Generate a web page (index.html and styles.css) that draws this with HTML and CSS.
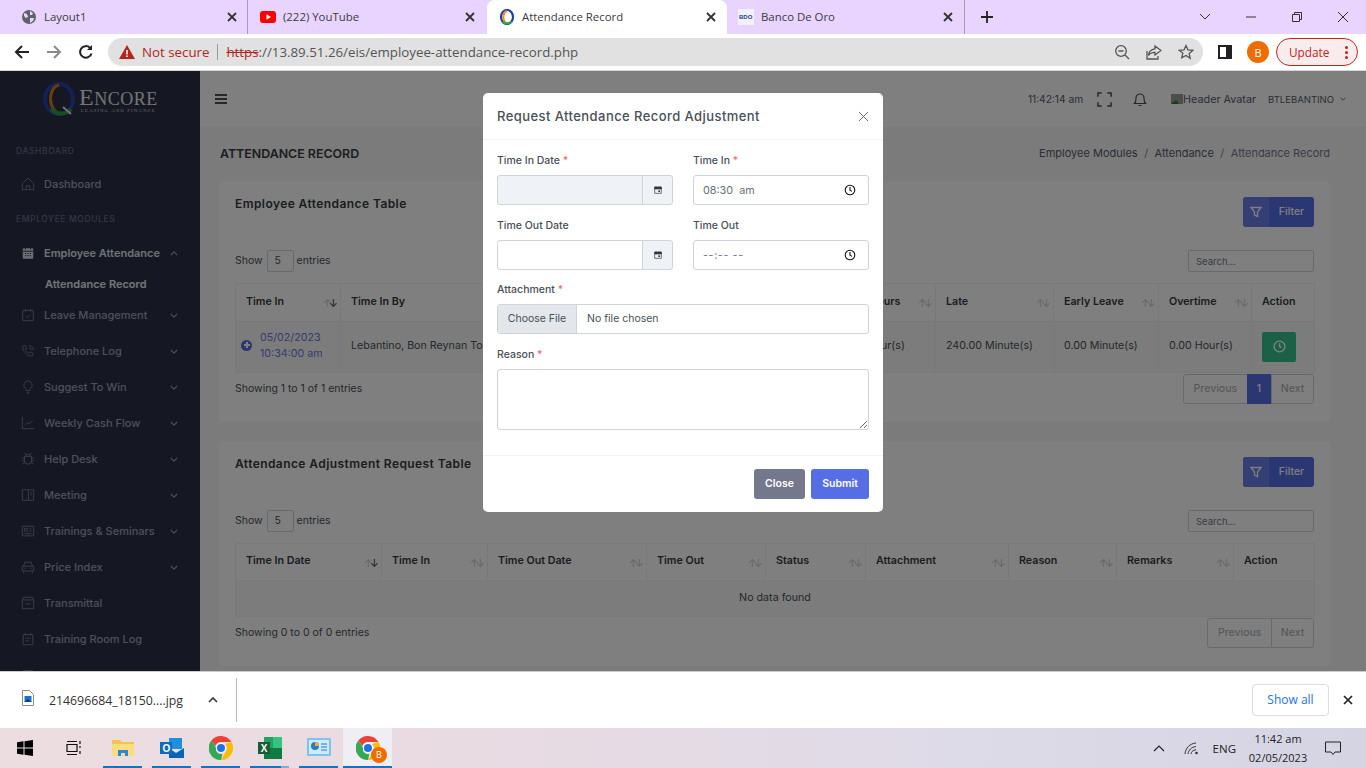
FILE: index.html
```html
<!DOCTYPE html>
<html lang="en">
<head>
    <meta charset="UTF-8">
    <meta name="viewport" content="width=device-width, initial-scale=1.0">
    <title>Attendance Record</title>
    <link rel="stylesheet" href="styles.css">
</head>
<body>
    <!-- browser tabs -->
    <div class="tabstrip">
        <div class="tab tab-first">
            <svg class="favicon" viewBox="0 0 16 16"><circle cx="8" cy="8" r="7" fill="#5f6368"/><path d="M3 4l3 1 1 3-2 1-2-2zM9 2l3 2-1 2-2 0zM9 9l4 0-1 3-3 2z" fill="#e8d4ff"/></svg>
            <span class="tab-title">Layout1</span>
            <svg class="tab-x" viewBox="0 0 10 10"><path d="M1 1l8 8M9 1l-8 8"/></svg>
        </div>
        <div class="tab tab-sep">
            <svg class="favicon" viewBox="0 0 16 16"><rect y="2" width="16" height="12" rx="3" fill="#f00"/><path d="M6.5 5.2v5.6L11 8z" fill="#fff"/></svg>
            <span class="tab-title">(222) YouTube</span>
            <svg class="tab-x" viewBox="0 0 10 10"><path d="M1 1l8 8M9 1l-8 8"/></svg>
        </div>
        <div class="tab tab-active">
            <svg class="favicon" viewBox="0 0 16 16"><ellipse cx="8" cy="8" rx="6" ry="7" fill="none" stroke="#1d3fb8" stroke-width="2.2"/><path d="M8 2C4 3 3 10 6 13" fill="none" stroke="#f28c1e" stroke-width="2"/><path d="M4 12.500c2 2.500 6 2.500 8.500 0" fill="none" stroke="#39a935" stroke-width="2.400"/></svg>
            <span class="tab-title">Attendance Record</span>
            <svg class="tab-x" viewBox="0 0 10 10"><path d="M1 1l8 8M9 1l-8 8"/></svg>
        </div>
        <div class="tab tab-last">
            <svg class="favicon" viewBox="0 0 16 16"><rect width="16" height="16" fill="#f1f1f6"/><text x="1" y="10" class="bdo-mark">BDO</text></svg>
            <span class="tab-title">Banco De Oro</span>
            <svg class="tab-x" viewBox="0 0 10 10"><path d="M1 1l8 8M9 1l-8 8"/></svg>
        </div>
        <svg class="new-tab" viewBox="0 0 12 12"><path d="M6 0v12M0 6h12"/></svg>
        <div class="window-btns">
            <svg class="win-chev" viewBox="0 0 12 8"><path d="M1 1l5 5 5-5"/></svg>
            <svg class="win-min" viewBox="0 0 12 12"><path d="M1 6h10"/></svg>
            <svg class="win-max" viewBox="0 0 12 12"><path d="M1.5 3.5h7v7h-7zM3.5 3.5v-2h7v7h-2"/></svg>
            <svg class="win-close" viewBox="0 0 12 12"><path d="M1 1l10 10M11 1l-10 10"/></svg>
        </div>
    </div>

    <!-- address bar -->
    <div class="toolbar">
        <svg class="nav-btn" viewBox="0 0 16 16"><path d="M15 8H2M8 2L2 8l6 6" stroke="#222"/></svg>
        <svg class="nav-btn" viewBox="0 0 16 16"><path d="M1 8h13M8 2l6 6-6 6" stroke="#8a8a8a"/></svg>
        <svg class="nav-btn" viewBox="0 0 16 16"><path d="M13.5 9.5A5.8 5.8 0 1 1 12 3.8" stroke="#222"/><path d="M14 1v5H9z" fill="#222" stroke="none"/></svg>
        <div class="omnibox">
            <svg class="warn" viewBox="0 0 16 14"><path d="M8 0l8 14H0z" fill="#b3261e"/><path d="M7.2 5h1.6v4.5H7.2zM7.2 10.5h1.6V12H7.2z" fill="#fff"/></svg>
            <span class="not-secure">Not secure</span>
            <span class="omni-sep"></span>
            <span class="url"><span class="https">https</span>://13.89.51.26/eis/employee-attendance-record.php</span>
            <svg class="omni-icon omni-zoom" viewBox="0 0 16 16"><circle cx="7" cy="7" r="5.3"/><path d="M11 11l4 4M4.5 7h5"/></svg>
            <svg class="omni-icon" viewBox="0 0 16 16"><path d="M9 2l6 4.5L9 11V8.3C6 8.3 3.8 9.3 2.5 11.5 2.8 8 5 5.3 9 4.8z M1 7v8h11v-3"/></svg>
            <svg class="omni-icon" viewBox="0 0 16 16"><path d="M8 1.5l2 4.4 4.8.5-3.6 3.2 1 4.7L8 11.4l-4.2 2.4 1-4.7L1.200 6.400l4.800-.5z"/></svg>
        </div>
        <svg class="side-panel" viewBox="0 0 14 14"><rect x="1" y="1" width="12" height="12" fill="#fff" stroke="#202124" stroke-width="2"/><rect x="8" y="1" width="5" height="12" fill="#202124"/></svg>
        <span class="profile">B</span>
        <div class="update-btn">Update <span class="update-dots"><i></i><i></i><i></i></span></div>
    </div>

    <!-- web page -->
    <div class="viewport">
        <aside class="sidebar">
            <div class="logo">
                <svg class="logo-mark" viewBox="0 0 36 36">
                    <ellipse cx="18" cy="18" rx="14" ry="15" fill="none" stroke="#2a3fb0" stroke-width="4"/>
                    <path d="M18 4C9 6 6 22 15 31" fill="none" stroke="#d97a1a" stroke-width="3"/>
                    <path d="M10 28c5 6 16 6 20 0" fill="none" stroke="#2f9e3f" stroke-width="4"/>
                    <path d="M22 26l8 7" stroke="#dfe3ee" stroke-width="2"/>
                </svg>
                <div class="logo-text">
                    <div class="logo-name"><span class="logo-cap">E</span>NCORE</div>
                    <div class="logo-sub">LEASING AND FINANCE</div>
                </div>
            </div>
            <div class="menu-title menu-title-first">DASHBOARD</div>
            <div class="menu-item">
                <svg class="menu-icon" viewBox="0 0 16 16"><path d="M1.500 7.500L8 1.500l6.500 6v7h-13zM6 14.500V10h4v4.500"/></svg>
                <span class="menu-label">Dashboard</span>
            </div>
            <div class="menu-title">EMPLOYEE MODULES</div>
            <div class="menu-item menu-open">
                <svg class="menu-icon" viewBox="0 0 16 16"><rect x="2" y="2.500" width="12" height="12" rx="1" fill="#d9dce8" stroke="none"/><path d="M5 1v3M11 1v3M2 6h12M4.500 8.500h1.500M7.300 8.500h1.500M10 8.500h1.500M4.500 11h1.500M7.300 11h1.500M10 11h1.500" stroke="#2a3046"/></svg>
                <span class="menu-label">Employee Attendance</span>
                <svg class="menu-chev" viewBox="0 0 10 6"><path d="M1 5l4-4 4 4"/></svg>
            </div>
            <div class="submenu-item">Attendance Record</div>
            <div class="menu-item">
                <svg class="menu-icon" viewBox="0 0 16 16"><path d="M2 3h12v11.500H2zM5 1v3M11 1v3M5.500 9l2 2 3.500-3.500"/></svg>
                <span class="menu-label">Leave Management</span>
                <svg class="menu-chev" viewBox="0 0 10 6"><path d="M1 1l4 4 4-4"/></svg>
            </div>
            <div class="menu-item">
                <svg class="menu-icon" viewBox="0 0 16 16"><path d="M2 2.500l2.500-1 2 3-1.500 1.500c.8 2 2.200 3.400 4.500 4.500L11 9l3 2-1 2.500c-5 1.500-12-5.500-11-11zM9 1.500c3 .3 5 2.500 5.500 5.500M9 4c1.500.3 2.500 1.300 3 3"/></svg>
                <span class="menu-label">Telephone Log</span>
                <svg class="menu-chev" viewBox="0 0 10 6"><path d="M1 1l4 4 4-4"/></svg>
            </div>
            <div class="menu-item">
                <svg class="menu-icon" viewBox="0 0 16 16"><path d="M8 1a4.800 4.800 0 0 0-3 8.500c.7.7 1 1.500 1 2.500h4c0-1 .3-1.800 1-2.500A4.800 4.800 0 0 0 8 1zM6.500 14h3M7 15.500h2"/></svg>
                <span class="menu-label">Suggest To Win</span>
                <svg class="menu-chev" viewBox="0 0 10 6"><path d="M1 1l4 4 4-4"/></svg>
            </div>
            <div class="menu-item">
                <svg class="menu-icon" viewBox="0 0 16 16"><path d="M1.500 1v13.500H15M4 10.500l3-3 2 1.500 4.500-3.500"/></svg>
                <span class="menu-label">Weekly Cash Flow</span>
                <svg class="menu-chev" viewBox="0 0 10 6"><path d="M1 1l4 4 4-4"/></svg>
            </div>
            <div class="menu-item">
                <svg class="menu-icon" viewBox="0 0 16 16"><path d="M4 5h8v5a4 4 0 0 1-8 0zM5.500 5a2.500 2.500 0 0 1 5 0M4 1l2 2.500M12 1l-2 2.500M1 7h3M12 7h3M1 10h3M12 10h3M1.500 14l3-2M14.500 14l-3-2"/></svg>
                <span class="menu-label">Help Desk</span>
                <svg class="menu-chev" viewBox="0 0 10 6"><path d="M1 1l4 4 4-4"/></svg>
            </div>
            <div class="menu-item">
                <svg class="menu-icon" viewBox="0 0 16 16"><path d="M1.500 2h13v12h-13zM8.500 2v12M10.500 5h2M10.500 7.500h2"/></svg>
                <span class="menu-label">Meeting</span>
                <svg class="menu-chev" viewBox="0 0 10 6"><path d="M1 1l4 4 4-4"/></svg>
            </div>
            <div class="menu-item">
                <svg class="menu-icon" viewBox="0 0 16 16"><path d="M1.500 2.500h13v11h-13zM4 5h3.500v3H4zM9.500 5.500H12M9.500 8H12M4 11h8"/></svg>
                <span class="menu-label">Trainings &amp; Seminars</span>
                <svg class="menu-chev" viewBox="0 0 10 6"><path d="M1 1l4 4 4-4"/></svg>
            </div>
            <div class="menu-item">
                <svg class="menu-icon" viewBox="0 0 16 16"><path d="M3 7l1.500-4.500h7L13 7M1.500 7h13v5.500h-13zM3 12.500V15M13 12.500V15M4 9.500h1.500M10.500 9.500H12"/></svg>
                <span class="menu-label">Price Index</span>
                <svg class="menu-chev" viewBox="0 0 10 6"><path d="M1 1l4 4 4-4"/></svg>
            </div>
            <div class="menu-item">
                <svg class="menu-icon" viewBox="0 0 16 16"><path d="M1.500 4.500L3 1.500h10l1.500 3v10h-13zM1.500 4.500h13M5.500 8c0 2 5 2 5 0"/></svg>
                <span class="menu-label">Transmittal</span>
            </div>
            <div class="menu-item">
                <svg class="menu-icon" viewBox="0 0 16 16"><path d="M2.500 3h11v11.500h-11zM5 1v3M11 1v3M5 7h6M5 10h4"/></svg>
                <span class="menu-label">Training Room Log</span>
            </div>
            <div class="menu-item menu-clipped">
                <svg class="menu-icon" viewBox="0 0 16 16"><path d="M2.500 3h11v11.500h-11zM5 7h6"/></svg>
            </div>
        </aside>

        <main class="main">
            <header class="topbar">
                <svg class="hamburger" viewBox="0 0 12 10"><path d="M0 1h12M0 5h12M0 9h12"/></svg>
                <div class="topbar-right">
                    <span class="clock">11:42:14 am</span>
                    <svg class="fullscreen" viewBox="0 0 16 16"><path d="M1 5V1h4M11 1h4v4M15 11v4h-4M5 15H1v-4"/></svg>
                    <svg class="bell" viewBox="0 0 16 16"><path d="M2.500 12.500c1-1 1.500-2 1.500-5.500a4 4 0 0 1 8 0c0 3.500.5 4.500 1.500 5.500zM6.500 14.500h3"/></svg>
                    <span class="avatar"><svg class="broken-img" viewBox="0 0 12 10"><rect width="12" height="10" fill="#9a9a9a"/><path d="M0 10l5-4 3 4z" fill="#2f7a2f"/></svg>Header Avatar</span>
                    <span class="username">BTLEBANTINO</span>
                    <svg class="user-chev" viewBox="0 0 10 6"><path d="M1 1l4 4 4-4"/></svg>
                </div>
            </header>

            <div class="page-title-row">
                <h1 class="page-title">ATTENDANCE RECORD</h1>
                <div class="breadcrumb">
                    <span>Employee Modules</span><i>/</i><span>Attendance</span><i>/</i><span class="crumb-now">Attendance Record</span>
                </div>
            </div>

            <section class="card">
                <div class="card-head">
                    <h2 class="card-title">Employee Attendance Table</h2>
                    <div class="filter-btn">
                        <span class="filter-icon"><svg viewBox="0 0 12 12"><path d="M1 1.500h10L7.500 6v4.500l-3-1.500V6z"/></svg></span>
                        <span class="filter-text">Filter</span>
                    </div>
                </div>
                <div class="table-controls">
                    <div class="show-entries">Show <span class="page-size">5</span> entries</div>
                    <input class="search" type="text" placeholder="Search...">
                </div>
                <table class="data-table attendance-table">
                    <colgroup>
                        <col class="c105"><col class="c245"><col class="c245"><col class="c105"><col class="c118"><col class="c105"><col class="c93"><col class="c63">
                    </colgroup>
                    <thead>
                        <tr>
                            <th>Time In<span class="sort sort-down"><i>↑</i><b>↓</b></span></th>
                            <th>Time In By<span class="sort"><i>↑</i><i>↓</i></span></th>
                            <th>Time Out<span class="sort"><i>↑</i><i>↓</i></span></th>
                            <th>Total Hours<span class="sort"><i>↑</i><i>↓</i></span></th>
                            <th>Late<span class="sort"><i>↑</i><i>↓</i></span></th>
                            <th>Early Leave<span class="sort"><i>↑</i><i>↓</i></span></th>
                            <th>Overtime<span class="sort"><i>↑</i><i>↓</i></span></th>
                            <th>Action</th>
                        </tr>
                    </thead>
                    <tbody>
                        <tr>
                            <td class="time-cell">
                                <span class="expand-dot"></span>
                                <span class="time-link">05/02/2023<br>10:34:00 am</span>
                            </td>
                            <td>Lebantino, Bon Reynan Torres</td>
                            <td></td>
                            <td>8.00 Hour(s)</td>
                            <td>240.00 Minute(s)</td>
                            <td>0.00 Minute(s)</td>
                            <td>0.00 Hour(s)</td>
                            <td><span class="action-btn"><svg viewBox="0 0 12 12"><circle cx="6" cy="6" r="5"/><path d="M6 3v3l2 1"/></svg></span></td>
                        </tr>
                    </tbody>
                </table>
                <div class="table-foot">
                    <div class="showing">Showing 1 to 1 of 1 entries</div>
                    <div class="pager">
                        <span class="pager-btn">Previous</span><span class="pager-btn pager-now">1</span><span class="pager-btn">Next</span>
                    </div>
                </div>
            </section>

            <section class="card">
                <div class="card-head">
                    <h2 class="card-title">Attendance Adjustment Request Table</h2>
                    <div class="filter-btn">
                        <span class="filter-icon"><svg viewBox="0 0 12 12"><path d="M1 1.500h10L7.500 6v4.500l-3-1.500V6z"/></svg></span>
                        <span class="filter-text">Filter</span>
                    </div>
                </div>
                <div class="table-controls">
                    <div class="show-entries">Show <span class="page-size">5</span> entries</div>
                    <input class="search" type="text" placeholder="Search...">
                </div>
                <table class="data-table request-table">
                    <colgroup>
                        <col class="c146"><col class="c106"><col class="c159"><col class="c119"><col class="c100"><col class="c143"><col class="c108"><col class="c117"><col class="c81">
                    </colgroup>
                    <thead>
                        <tr>
                            <th>Time In Date<span class="sort sort-down"><i>↑</i><b>↓</b></span></th>
                            <th>Time In<span class="sort"><i>↑</i><i>↓</i></span></th>
                            <th>Time Out Date<span class="sort"><i>↑</i><i>↓</i></span></th>
                            <th>Time Out<span class="sort"><i>↑</i><i>↓</i></span></th>
                            <th>Status<span class="sort"><i>↑</i><i>↓</i></span></th>
                            <th>Attachment<span class="sort"><i>↑</i><i>↓</i></span></th>
                            <th>Reason<span class="sort"><i>↑</i><i>↓</i></span></th>
                            <th>Remarks<span class="sort"><i>↑</i><i>↓</i></span></th>
                            <th>Action</th>
                        </tr>
                    </thead>
                    <tbody>
                        <tr><td class="no-data" colspan="9">No data found</td></tr>
                    </tbody>
                </table>
                <div class="table-foot">
                    <div class="showing">Showing 0 to 0 of 0 entries</div>
                    <div class="pager">
                        <span class="pager-btn">Previous</span><span class="pager-btn">Next</span>
                    </div>
                </div>
            </section>
        </main>

        <!-- modal over the dimmed page -->
        <div class="backdrop">
            <div class="modal">
                <div class="modal-head">
                    <h3 class="modal-title">Request Attendance Record Adjustment</h3>
                    <svg class="modal-x" viewBox="0 0 12 12"><path d="M1 1l10 10M11 1l-10 10"/></svg>
                </div>
                <form class="modal-body">
                    <div class="form-row">
                        <div class="field">
                            <label>Time In Date <em>*</em></label>
                            <div class="date-group">
                                <input class="date-input date-locked" type="text" readonly>
                                <span class="date-addon"><svg viewBox="0 0 12 12"><path d="M1 2h10v9H1z" fill="none"/><path d="M1 1.500h10v3H1zM3 .5v2M9 .5v2" /><rect x="6.500" y="6.500" width="2.500" height="2.500" class="cal-dot"/></svg></span>
                            </div>
                        </div>
                        <div class="field">
                            <label>Time In <em>*</em></label>
                            <div class="time-input"><span>08:30&nbsp; am</span><svg viewBox="0 0 12 12"><circle cx="6" cy="6" r="4.800"/><path d="M6 3v3.200l2 1.200"/></svg></div>
                        </div>
                    </div>
                    <div class="form-row form-row-tight">
                        <div class="field">
                            <label>Time Out Date</label>
                            <div class="date-group">
                                <input class="date-input" type="text">
                                <span class="date-addon"><svg viewBox="0 0 12 12"><path d="M1 2h10v9H1z" fill="none"/><path d="M1 1.500h10v3H1zM3 .5v2M9 .5v2" /><rect x="6.500" y="6.500" width="2.500" height="2.500" class="cal-dot"/></svg></span>
                            </div>
                        </div>
                        <div class="field">
                            <label>Time Out</label>
                            <div class="time-input time-empty"><span>--:-- --</span><svg viewBox="0 0 12 12"><circle cx="6" cy="6" r="4.800"/><path d="M6 3v3.200l2 1.200"/></svg></div>
                        </div>
                    </div>
                    <div class="field">
                        <label>Attachment <em>*</em></label>
                        <div class="file-input"><span class="file-btn">Choose File</span><span class="file-name">No file chosen</span></div>
                    </div>
                    <div class="field">
                        <label>Reason <em>*</em></label>
                        <textarea class="reason"></textarea>
                    </div>
                </form>
                <div class="modal-foot">
                    <button class="btn btn-close" type="button">Close</button>
                    <button class="btn btn-submit" type="button">Submit</button>
                </div>
            </div>
        </div>
    </div>

    <!-- downloads shelf -->
    <div class="downloads">
        <svg class="dl-file" viewBox="0 0 12 16"><path d="M.5.500h7l4 4v11H.5z" fill="#fff" stroke="#8a8a8a"/><rect x="2.500" y="6" width="7" height="6" fill="#1a73c8"/><path d="M2.500 12l3-3 4 3z" fill="#0b3f78"/></svg>
        <span class="dl-name">214696684_18150....jpg</span>
        <svg class="dl-caret" viewBox="0 0 10 6"><path d="M1 5l4-4 4 4"/></svg>
        <span class="dl-sep"></span>
        <span class="show-all">Show all</span>
        <svg class="dl-x" viewBox="0 0 10 10"><path d="M1 1l8 8M9 1l-8 8"/></svg>
    </div>

    <!-- windows taskbar -->
    <div class="taskbar">
        <div class="task-item">
            <svg class="task-icon task-win" viewBox="0 0 16 16"><path d="M0 2.300l6.500-1v6.200H0zM7.500 1.200L16 0v7.500H7.500zM0 8.500h6.500v6.200l-6.500-1zM7.500 8.500H16V16l-8.500-1.200z" fill="#000"/></svg>
        </div>
        <div class="task-item">
            <svg class="task-icon task-view" viewBox="0 0 16 16"><path d="M1 4.500h10v7H1zM1 1.500h10M1 14.500h10M14 1v3M14 6v2M14 11v3" fill="none" stroke="#111" stroke-width="1.200"/></svg>
        </div>
        <div class="task-item task-on">
            <svg class="task-icon" viewBox="0 0 24 20"><path d="M1 2h8l2 2h12v14H1z" fill="#f3c34e"/><path d="M1 6h22v12H1z" fill="#fbdc7e"/><path d="M7 18v-6h10v6h-3v-3h-4v3z" fill="#2b88d8"/></svg>
        </div>
        <div class="task-item task-on">
            <svg class="task-icon" viewBox="0 0 24 24"><path d="M9 2h13v11H9z" fill="#1f8fe0"/><path d="M9 12l7 5 8-5v10H9z" fill="#0a64b4"/><rect x="0" y="6" width="12" height="12" fill="#0f6cbd"/><text x="2.500" y="16" class="task-letter">O</text></svg>
        </div>
        <div class="task-item task-on">
            <svg class="task-icon" viewBox="0 0 24 24"><use href="#chrome-logo"/></svg>
        </div>
        <div class="task-item task-on task-split">
            <svg class="task-icon" viewBox="0 0 24 24"><rect x="6" y="1" width="18" height="22" fill="#21a366"/><path d="M15 1h9v11h-9z" fill="#33c481"/><path d="M6 12h18v11H6z" fill="#107c41"/><rect x="0" y="6" width="12" height="12" fill="#185c37"/><text x="2.800" y="16" class="task-letter">X</text></svg>
        </div>
        <div class="task-item task-on">
            <svg class="task-icon" viewBox="0 0 24 20"><rect width="24" height="18" rx="1" fill="#7cc4ee"/><rect x="2" y="2" width="20" height="14" fill="#cfeafa"/><circle cx="8" cy="8" r="4" fill="#1f7fc8"/><path d="M8 8V4a4 4 0 0 1 4 4z" fill="#f3a93c"/><path d="M14 6h6M14 9h6M14 12h6" stroke="#1f7fc8"/></svg>
        </div>
        <div class="task-item task-on task-active">
            <svg class="task-icon task-chrome" viewBox="0 0 24 24"><use href="#chrome-logo"/></svg>
            <span class="task-badge">B</span>
        </div>
        <div class="tray">
            <svg class="tray-caret" viewBox="0 0 12 7"><path d="M1 6l5-5 5 5"/></svg>
            <svg class="tray-wifi" viewBox="0 0 16 14"><path d="M1 13C1.500 7 6 2.500 12 2M4 13c.5-4 3.500-7 8-7.500M7 13c.3-2 2-4 5-4.300"/><circle cx="12.500" cy="12" r="1.300" class="wifi-dot"/></svg>
            <span class="tray-lang">ENG</span>
            <div class="tray-clock">11:42 am<br>02/05/2023</div>
            <svg class="tray-note" viewBox="0 0 16 15"><path d="M.5 1h15v10H10l-2 2.500L6 11H.5z"/></svg>
        </div>
    </div>

    <svg class="sprite" viewBox="0 0 24 24">
        <symbol id="chrome-logo" viewBox="0 0 24 24">
            <path d="M12 0a12 12 0 0 1 10.400 6H12a6 6 0 0 0-5.800 4.500L2.500 4.300A12 12 0 0 1 12 0z" fill="#ea4335"/>
            <path d="M22.400 6A12 12 0 0 1 12 24l5.200-9A6 6 0 0 0 16 8z" fill="#fbbc04"/>
            <path d="M12 24A12 12 0 0 1 2.500 4.300L7 12a5 5 0 0 0 6.500 5.800z" fill="#34a853"/>
            <circle cx="12" cy="12" r="5" fill="#fff"/>
            <circle cx="12" cy="12" r="4" fill="#1a73e8"/>
        </symbol>
    </svg>
</body>
</html>
```

FILE: styles.css
```css
* {
    box-sizing: border-box;
}
html, body {
    margin: 0;
    padding: 0;
}
body {
    width: 1366px;
    height: 768px;
    overflow: hidden;
    font-family: "Open Sans", sans-serif;
    background-color: #fff;
    color: #202124;
}
svg {
    display: block;
    flex: none;
}
.sprite {
    display: none;
}

/* tabs */
.tabstrip {
    display: flex;
    align-items: center;
    height: 34px;
    background-color: #e8d4ff;
}
.tab {
    display: flex;
    align-items: center;
    height: 34px;
    font-size: 11.400px;
    color: #3c3c3c;
}
.tab-first {
    width: 247px;
    padding: 0 10px 0 21px;
}
.tab-sep {
    width: 240px;
    padding: 0 12px 0 12px;
    border-left: 1px solid #a89cb5;
}
.tab-active {
    width: 240px;
    padding: 0 11px 0 12px;
    background-color: #fff;
    border-radius: 8px 8px 0 0;
}
.tab-last {
    width: 238px;
    padding: 0 11px 0 11px;
    border-right: 1px solid #a89cb5;
}
.favicon {
    width: 16px;
    height: 16px;
    margin-right: 7px;
}
.tab-title {
    flex: 1;
    margin-top: -2px;
    white-space: nowrap;
}
.tab-x {
    width: 10px;
    height: 10px;
    fill: none;
    stroke: #333;
    stroke-width: 1.800;
}
.bdo-mark {
    font-family: "Liberation Sans", sans-serif;
    font-size: 6px;
    font-weight: 700;
    fill: #1c3f94;
}
.new-tab {
    width: 12px;
    height: 12px;
    margin-left: 16px;
    fill: none;
    stroke: #222;
    stroke-width: 1.800;
}
.window-btns {
    display: flex;
    align-items: center;
    margin-left: auto;
    margin-right: 17px;
    gap: 34px;
}
.window-btns svg {
    fill: none;
    stroke: #333;
    stroke-width: 1;
    width: 12px;
    height: 12px;
}
.window-btns .win-chev {
    height: 8px;
}

/* address bar */
.toolbar {
    display: flex;
    align-items: center;
    height: 37px;
    padding-left: 14px;
    background-color: #fff;
    border-bottom: 1px solid #d5d5d5;
}
.nav-btn {
    width: 16px;
    height: 16px;
    margin-right: 16px;
    fill: none;
    stroke-width: 2;
}
.omnibox {
    display: flex;
    align-items: center;
    width: 1095px;
    height: 28px;
    margin-left: -2px;
    padding: 0 9px 0 11px;
    border-radius: 14px;
    background-color: #e1e1e1;
    white-space: nowrap;
}
.warn {
    width: 16px;
    height: 14px;
    margin-right: 7px;
}
.not-secure {
    color: #b3261e;
    font-size: 13.300px;
}
.omni-sep {
    width: 1px;
    height: 16px;
    margin: 0 8px;
    background-color: #9a9a9a;
}
.url {
    flex: 1;
    color: #555;
    font-size: 13.300px;
}
.https {
    color: #b3261e;
    text-decoration: line-through;
}
.omni-icon {
    width: 16px;
    height: 16px;
    margin-left: 16px;
    fill: none;
    stroke: #555;
    stroke-width: 1.300;
}
.side-panel {
    width: 14px;
    height: 14px;
    margin-left: 15px;
}
.profile {
    display: flex;
    align-items: center;
    justify-content: center;
    width: 22px;
    height: 22px;
    margin-left: 15px;
    border-radius: 50%;
    background-color: #ee6c00;
    color: #fff;
    font-size: 11px;
}
.update-btn {
    display: flex;
    align-items: center;
    justify-content: space-between;
    width: 82px;
    height: 28px;
    margin-left: 7px;
    padding: 0 9px 0 12px;
    border: 1px solid #c5221f;
    border-radius: 14px;
    background-color: #f9ecec;
    color: #c5221f;
    font-size: 11.800px;
}
.update-dots {
    display: flex;
    flex-direction: column;
    gap: 2px;
}
.update-dots i {
    width: 3px;
    height: 3px;
    border-radius: 50%;
    background-color: #c5221f;
}

/* web page under the backdrop */
.viewport {
    position: relative;
    display: flex;
    height: 600px;
    overflow: hidden;
    background-color: #f6f6f6;
    font-family: Inter, sans-serif;
}
.sidebar {
    flex: none;
    width: 200px;
    background-color: #2a3046;
}
.logo {
    display: flex;
    align-items: center;
    height: 56px;
    padding-left: 41px;
}
.logo-mark {
    width: 36px;
    height: 36px;
}
.logo-text {
    margin-left: 2px;
    margin-top: 5px;
    text-align: center;
}
.logo-name {
    font-family: "Liberation Serif", serif;
    font-size: 18px;
    line-height: 17px;
    letter-spacing: .5px;
    color: #e8e8e8;
}
.logo-cap {
    font-size: 24px;
}
.logo-sub {
    font-family: "Liberation Serif", serif;
    font-size: 5px;
    line-height: 6px;
    letter-spacing: 1px;
    color: #c8c8c8;
}
.menu-title {
    height: 16px;
    margin: 9px 0 10px 16px;
    font-size: 8.500px;
    line-height: 16px;
    font-weight: 500;
    letter-spacing: .6px;
    color: #666c8c;
}
.menu-title-first {
    margin-top: 16px;
    margin-bottom: 7px;
}
.menu-item {
    display: flex;
    align-items: center;
    height: 36px;
    padding: 0 22px 0 21px;
    color: #9ca0b5;
    font-size: 11px;
    font-weight: 500;
}
.menu-open {
    height: 32px;
    color: #dfe1ea;
    font-weight: 600;
}
.menu-icon {
    width: 14px;
    height: 14px;
    margin-right: 9px;
    fill: none;
    stroke: #7a8299;
    stroke-width: 1;
}
.menu-label {
    flex: 1;
    white-space: nowrap;
}
.menu-chev {
    width: 8px;
    height: 5px;
    fill: none;
    stroke: #9ca0b5;
    stroke-width: 1.400;
}
.submenu-item {
    height: 28px;
    padding-left: 45px;
    font-size: 11px;
    line-height: 30px;
    font-weight: 600;
    color: #e8e9f0;
}

.main {
    flex: 1;
    min-width: 0;
}
.topbar {
    display: flex;
    align-items: center;
    justify-content: space-between;
    height: 56px;
    padding: 0 20px 0 15px;
    background-color: #fff;
    color: #555b6d;
    font-size: 10.200px;
}
.hamburger {
    width: 12px;
    height: 10px;
    fill: none;
    stroke: #495057;
    stroke-width: 1.800;
}
.topbar-right {
    display: flex;
    align-items: center;
    white-space: nowrap;
}
.clock {
    margin-right: 14px;
}
.fullscreen {
    width: 15px;
    height: 15px;
    fill: none;
    stroke: #495057;
    stroke-width: 1.600;
    margin-right: 20px;
}
.bell {
    width: 16px;
    height: 16px;
    fill: none;
    stroke: #495057;
    stroke-width: 1.200;
    margin-right: 23px;
}
.avatar {
    display: flex;
    align-items: center;
    width: 88px;
    font-size: 10.800px;
}
.broken-img {
    width: 12px;
    height: 10px;
}
.username {
    margin-left: 9px;
    font-size: 9.500px;
}
.user-chev {
    width: 6px;
    height: 4px;
    margin-left: 6px;
    fill: none;
    stroke: #495057;
    stroke-width: 1.400;
}
.page-title-row {
    display: flex;
    align-items: center;
    justify-content: space-between;
    height: 54px;
    padding-bottom: 2px;
    margin: 0 36px 0 20px;
}
.page-title {
    margin: 0;
    font-size: 12.400px;
    font-weight: 600;
    color: #343a40;
}
.breadcrumb {
    display: flex;
    font-size: 11px;
    color: #555b6d;
}
.breadcrumb i {
    margin: 0 6.500px;
    font-style: normal;
    color: #888;
}
.crumb-now {
    color: #74788d;
}

.card {
    margin: 0 36px 19px 19px;
    padding: 16px 16px 18px;
    background-color: #fff;
    border-radius: 4px;
}
.card-head {
    display: flex;
    justify-content: space-between;
    height: 53px;
}
.card-title {
    margin: 0;
    font-size: 12px;
    line-height: 13px;
    font-weight: 600;
    color: #343a40;
    letter-spacing: .42px;
}
.filter-btn {
    display: flex;
    width: 71px;
    height: 30px;
    border-radius: 3px;
    overflow: hidden;
    background-color: #556ee6;
    color: #fff;
    font-size: 10.500px;
    font-weight: 500;
}
.filter-icon {
    display: flex;
    align-items: center;
    justify-content: center;
    width: 26px;
    background-color: #6b7fe9;
}
.filter-icon svg {
    width: 12px;
    height: 12px;
    fill: none;
    stroke: #fff;
    stroke-width: 1.300;
}
.filter-text {
    flex: 1;
    text-align: center;
    line-height: 29px;
}
.table-controls {
    display: flex;
    align-items: center;
    justify-content: space-between;
    height: 22px;
    margin-bottom: 11px;
}
.show-entries {
    font-size: 10.500px;
    color: #495057;
}
.page-size {
    display: inline-block;
    width: 27px;
    height: 22px;
    margin: 0 0 0 1px;
    border: 1px solid #ced4da;
    border-radius: 2px;
    line-height: 20px;
    padding-left: 7px;
}
.search {
    width: 126px;
    height: 22px;
    padding: 0 7px;
    border: 1px solid #ced4da;
    border-radius: 2px;
    font-family: Inter, sans-serif;
    font-size: 9.500px;
    background-color: #fff;
}
.search::placeholder {
    color: #74788d;
}

.data-table {
    width: 100%;
    table-layout: fixed;
    border-collapse: collapse;
    font-size: 10.700px;
    color: #495057;
}
.c63 { width: 63px; }
.c81 { width: 81px; }
.c93 { width: 93px; }
.c100 { width: 100px; }
.c105 { width: 105px; }
.c106 { width: 106px; }
.c108 { width: 108px; }
.c117 { width: 117px; }
.c118 { width: 118px; }
.c119 { width: 119px; }
.c143 { width: 143px; }
.c146 { width: 146px; }
.c159 { width: 159px; }
.c245 { width: 245px; }
.data-table th, .data-table td {
    border: 1px solid #eff2f7;
    padding: 0 10px;
    text-align: left;
    overflow: hidden;
    white-space: nowrap;
}
.data-table th {
    position: relative;
    height: 38px;
    padding-bottom: 3px;
    font-weight: 600;
    color: #343a40;
    background-color: #fff;
}
.data-table td {
    padding-bottom: 3px;
    background-color: #f8f9fa;
}
.attendance-table td {
    height: 51px;
}
.request-table th {
    height: 37px;
    padding-bottom: 4px;
}
.request-table td {
    height: 36px;
}
.data-table .no-data {
    text-align: center;
}
.sort {
    position: absolute;
    right: 5px;
    top: 13px;
    font-size: 11px;
    line-height: 12px;
    letter-spacing: -3px;
}
.sort i {
    font-style: normal;
    font-weight: 400;
    color: #c8cbd0;
}
.sort b {
    font-weight: 400;
    color: #343a40;
}
.data-table .time-cell {
    padding-left: 5px;
}
.expand-dot {
    position: relative;
    display: inline-block;
    width: 11px;
    height: 11px;
    margin-right: 5px;
    vertical-align: 6px;
    border-radius: 50%;
    background-color: #556ee6;
}
.expand-dot::before {
    content: "";
    position: absolute;
    left: 2.500px;
    top: 4.500px;
    width: 6px;
    height: 2px;
    background-color: #fff;
}
.expand-dot::after {
    content: "";
    position: absolute;
    left: 4.500px;
    top: 2.500px;
    width: 2px;
    height: 6px;
    background-color: #fff;
}
.time-link {
    display: inline-block;
    color: #6a78d8;
    line-height: 16px;
}
.action-btn {
    display: flex;
    align-items: center;
    justify-content: center;
    width: 34px;
    height: 30px;
    margin-top: 2px;
    border-radius: 2px;
    background-color: #34c38f;
}
.action-btn svg {
    width: 13px;
    height: 13px;
    fill: none;
    stroke: #fff;
    stroke-width: 1.300;
}
.table-foot {
    display: flex;
    justify-content: space-between;
    margin-top: 1px;
}
.showing {
    padding-top: 8px;
    font-size: 10.500px;
    color: #495057;
}
.pager {
    display: flex;
    height: 30px;
    border: 1px solid #ced4da;
    border-radius: 3px;
    font-size: 10.500px;
    color: #adb5bd;
}
.pager-btn {
    padding: 0 9.500px;
    line-height: 28px;
    font-weight: 500;
    border-left: 1px solid #ced4da;
}
.pager-btn:first-child {
    border-left: 0;
}
.pager-btn:last-child {
    width: 42px;
    padding: 0;
    text-align: center;
}
.pager-now {
    margin: -1px 0;
    padding: 1px 10px 0;
    border-left: 0;
    background-color: #556ee6;
    color: #fff;
}

.backdrop {
    position: absolute;
    left: 0;
    top: 0;
    right: 0;
    bottom: 0;
    display: flex;
    justify-content: center;
    align-items: flex-start;
    padding-top: 22px;
    background-color: rgba(0, 0, 0, .5);
}
.modal {
    width: 400px;
    height: 419px;
    background-color: #fff;
    border-radius: 5px;
    color: #495057;
}
.modal-head {
    display: flex;
    align-items: center;
    justify-content: space-between;
    height: 47px;
    padding: 0 14px;
    border-bottom: 1px solid #eff2f7;
}
.modal-title {
    margin: 0;
    font-size: 13px;
    font-weight: 500;
    letter-spacing: .43px;
    color: #495057;
}
.modal-x {
    width: 11px;
    height: 11px;
    fill: none;
    stroke: #495057;
    stroke-width: .9;
}
.modal-body {
    height: 316px;
    padding: 13px 14px 0;
    border-bottom: 1px solid #eff2f7;
}
.form-row {
    display: grid;
    grid-template-columns: 176px 176px;
    column-gap: 20px;
}
.field {
    margin-bottom: 13px;
}
.form-row-tight .field {
    margin-bottom: 12px;
}
.field label {
    display: block;
    height: 16px;
    margin-bottom: 6px;
    font-size: 10.500px;
    line-height: 16px;
    font-weight: 500;
    color: #495057;
}
.field em {
    font-style: normal;
    color: #f46a6a;
}
.date-group {
    display: flex;
    height: 30px;
}
.date-input {
    flex: 1;
    min-width: 0;
    border: 1px solid #ced4da;
    border-radius: 3px 0 0 3px;
    background-color: #fff;
    outline: none;
}
.date-locked {
    background-color: #eff2f7;
}
.date-addon {
    display: flex;
    align-items: center;
    justify-content: center;
    width: 31px;
    margin-left: -1px;
    border: 1px solid #ced4da;
    border-radius: 0 3px 3px 0;
    background-color: #eff2f7;
}
.date-addon svg {
    width: 8px;
    height: 8px;
    fill: #343a40;
    stroke: #343a40;
    stroke-width: 1;
}
.cal-dot {
    stroke: none;
}
.time-input {
    display: flex;
    align-items: center;
    justify-content: space-between;
    height: 30px;
    padding: 0 12px 0 9px;
    border: 1px solid #ced4da;
    border-radius: 3px;
    font-size: 10.800px;
    color: #6a7078;
}
.time-empty span {
    letter-spacing: .6px;
    color: #74788d;
}
.time-input svg {
    width: 12px;
    height: 12px;
    fill: none;
    stroke: #111;
    stroke-width: 1.100;
}
.file-input {
    display: flex;
    height: 30px;
    border: 1px solid #ced4da;
    border-radius: 3px;
    overflow: hidden;
    font-size: 10.500px;
    line-height: 28px;
    color: #495057;
}
.file-btn {
    width: 79px;
    text-align: center;
    background-color: #e3e6ea;
    border-right: 1px solid #ced4da;
}
.file-name {
    padding-left: 10px;
}
.reason {
    display: block;
    width: 100%;
    height: 61px;
    border: 1px solid #ced4da;
    border-radius: 3px;
    outline: none;
}
.modal-foot {
    display: flex;
    justify-content: flex-end;
    gap: 6px;
    padding: 13px 14px 0;
}
.btn {
    height: 30px;
    padding: 0 0 1px;
    border: 0;
    border-radius: 3px;
    color: #fff;
    font-family: Inter, sans-serif;
    font-size: 10.500px;
    font-weight: 600;
}
.btn-close {
    width: 51px;
    background-color: #74788d;
}
.btn-submit {
    width: 58px;
    background-color: #556ee6;
}

/* downloads shelf */
.downloads {
    display: flex;
    align-items: center;
    height: 57px;
    padding-left: 22px;
    background-color: #fff;
    border-top: 1px solid #ccc;
    font-size: 12.300px;
}
.dl-file {
    width: 12px;
    height: 16px;
    margin-top: -4px;
}
.dl-name {
    width: 159px;
    margin-left: 15px;
    white-space: nowrap;
    color: #333;
}
.dl-caret {
    width: 10px;
    height: 6px;
    fill: none;
    stroke: #333;
    stroke-width: 1.600;
}
.dl-sep {
    width: 1px;
    height: 44px;
    margin-left: 18px;
    background-color: #b8b8b8;
}
.show-all {
    width: 77px;
    height: 32px;
    margin-left: auto;
    border: 1px solid #dadce0;
    border-radius: 4px;
    color: #1a73e8;
    font-size: 12px;
    line-height: 30px;
    text-align: center;
}
.dl-x {
    width: 10px;
    height: 10px;
    margin: 0 13px 0 14px;
    fill: none;
    stroke: #222;
    stroke-width: 1.700;
}

/* taskbar */
.taskbar {
    display: flex;
    height: 40px;
    background: linear-gradient(90deg, #ecdde0 0%, #e9dbe2 35%, #dedbe8 70%, #d5d4e3 100%);
}
.task-item {
    position: relative;
    display: flex;
    align-items: center;
    justify-content: center;
    width: 49px;
    height: 40px;
}
.task-on::after {
    content: "";
    position: absolute;
    left: 5px;
    right: 5px;
    bottom: 0;
    height: 2px;
    background-color: #0078d4;
}
.task-split::after {
    background: linear-gradient(90deg, #0078d4 80%, #6cb2e6 80%);
}
.task-active {
    background-color: #f0eef5;
}
.task-active::after {
    left: 0;
    right: 0;
}
.task-icon {
    width: 24px;
    height: 24px;
}
.task-win, .task-view {
    width: 16px;
    height: 16px;
}
.task-letter {
    font-family: "Liberation Sans", sans-serif;
    font-size: 10px;
    font-weight: 700;
    fill: #fff;
}
.task-badge {
    position: absolute;
    left: 28px;
    top: 19px;
    width: 16px;
    height: 16px;
    border-radius: 50%;
    background-color: #ee6c00;
    color: #fff;
    font-family: "Open Sans", sans-serif;
    font-size: 9px;
    line-height: 16px;
    text-align: center;
}
.tray {
    display: flex;
    align-items: center;
    margin-left: auto;
    padding-right: 25px;
    font-size: 11px;
    color: #222;
}
.tray-caret {
    width: 12px;
    height: 7px;
    fill: none;
    stroke: #222;
    stroke-width: 1.200;
}
.tray-wifi {
    width: 16px;
    height: 14px;
    margin-left: 19px;
    fill: none;
    stroke: #333;
    stroke-width: 1;
}
.wifi-dot {
    fill: #333;
    stroke: none;
}
.tray-lang {
    margin-left: 13px;
    font-size: 11.500px;
}
.tray-clock {
    width: 70px;
    margin-left: 7px;
    line-height: 19px;
    text-align: center;
}
.tray-note {
    width: 16px;
    height: 15px;
    margin-left: 12px;
    fill: none;
    stroke: #222;
    stroke-width: 1;
}
```
